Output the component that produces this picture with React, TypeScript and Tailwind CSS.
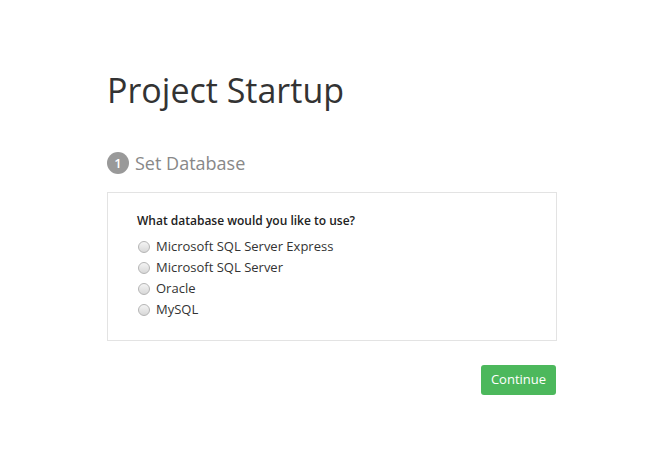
const options = ['Microsoft SQL Server Express', 'Microsoft SQL Server', 'Oracle', 'MySQL'];

export default function App() {
  return (
    <div className="min-h-[464px] w-[660px] bg-white font-['Open_Sans',sans-serif]">
      <div className="ml-[107px] w-[450px] pt-[65px]">
        <h1 className="text-[34px] leading-[50px] font-normal text-[#333]">Project Startup</h1>

        <div className="mt-[36px] flex items-center gap-[6px]">
          <span className="flex h-[22px] w-[22px] items-center justify-center rounded-full bg-[#999] text-[13px] leading-none font-semibold text-white">
            1
          </span>
          <span className="text-[18px] leading-[24px] text-[#888]">Set Database</span>
        </div>

        <div className="mt-[17px] h-[149px] border border-[#e3e3e3] pt-[19px] pl-[29px]">
          <p className="text-[12px] leading-[18px] font-semibold text-[#222]">What database would you like to use?</p>
          <div className="mt-[6px] flex flex-col">
            {options.map((o) => (
              <label key={o} className="flex h-[21px] items-center gap-[6px] text-[13px] text-[#333]">
                <span className="ml-[1px] h-[12px] w-[12px] rounded-full border border-[#b5b5b5] bg-[linear-gradient(#f4f4f4,#d8d8d8)]" />
                {o}
              </label>
            ))}
          </div>
        </div>

        <div className="mt-[24px] flex justify-end pr-[1px]">
          <button
            type="button"
            className="h-[30px] w-[75px] rounded-[3px] bg-[#4cb85c] text-[13px] text-white"
          >
            Continue
          </button>
        </div>
      </div>
    </div>
  );
}
